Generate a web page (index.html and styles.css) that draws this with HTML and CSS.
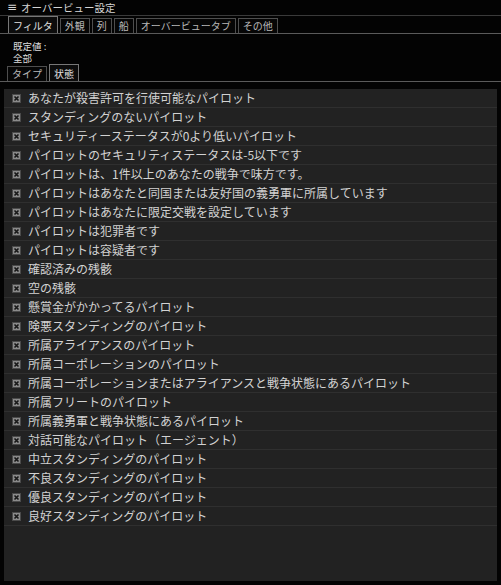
FILE: index.html
```html
<!DOCTYPE html>
<html lang="ja">
<head>
<meta charset="utf-8">
<link rel="stylesheet" href="styles.css">
</head>
<body>
<div class="window">
  <div class="titlebar"><span class="menu">≡</span><span class="title">オーバービュー設定</span></div>
  <div class="tabs">
    <div class="tab active">フィルタ</div>
    <div class="tab">外観</div>
    <div class="tab">列</div>
    <div class="tab">船</div>
    <div class="tab">オーバービュータブ</div>
    <div class="tab">その他</div>
  </div>
  <div class="preset">
    <div class="preset-line">既定値 :</div>
    <div class="preset-line">全部</div>
  </div>
  <div class="subtabs">
    <div class="tab">タイプ</div>
    <div class="tab active">状態</div>
  </div>
  <div class="panel">
    <div class="row"><svg class="cb" viewBox="0 0 9 9"><rect x="0.5" y="0.5" width="8" height="8" fill="#8a8a8a" stroke="#4a4a4a"/><path d="M2.5 2.5L6.5 6.5M6.5 2.5L2.5 6.5" stroke="#161616" stroke-width="1.6"/></svg><span>あなたが殺害許可を行使可能なパイロット</span></div>
    <div class="row"><svg class="cb" viewBox="0 0 9 9"><rect x="0.5" y="0.5" width="8" height="8" fill="#8a8a8a" stroke="#4a4a4a"/><path d="M2.5 2.5L6.5 6.5M6.5 2.5L2.5 6.5" stroke="#161616" stroke-width="1.6"/></svg><span>スタンディングのないパイロット</span></div>
    <div class="row"><svg class="cb" viewBox="0 0 9 9"><rect x="0.5" y="0.5" width="8" height="8" fill="#8a8a8a" stroke="#4a4a4a"/><path d="M2.5 2.5L6.5 6.5M6.5 2.5L2.5 6.5" stroke="#161616" stroke-width="1.6"/></svg><span>セキュリティーステータスが0より低いパイロット</span></div>
    <div class="row"><svg class="cb" viewBox="0 0 9 9"><rect x="0.5" y="0.5" width="8" height="8" fill="#8a8a8a" stroke="#4a4a4a"/><path d="M2.5 2.5L6.5 6.5M6.5 2.5L2.5 6.5" stroke="#161616" stroke-width="1.6"/></svg><span>パイロットのセキュリティステータスは-5以下です</span></div>
    <div class="row"><svg class="cb" viewBox="0 0 9 9"><rect x="0.5" y="0.5" width="8" height="8" fill="#8a8a8a" stroke="#4a4a4a"/><path d="M2.5 2.5L6.5 6.5M6.5 2.5L2.5 6.5" stroke="#161616" stroke-width="1.6"/></svg><span>パイロットは、1件以上のあなたの戦争で味方です。</span></div>
    <div class="row"><svg class="cb" viewBox="0 0 9 9"><rect x="0.5" y="0.5" width="8" height="8" fill="#8a8a8a" stroke="#4a4a4a"/><path d="M2.5 2.5L6.5 6.5M6.5 2.5L2.5 6.5" stroke="#161616" stroke-width="1.6"/></svg><span>パイロットはあなたと同国または友好国の義勇軍に所属しています</span></div>
    <div class="row"><svg class="cb" viewBox="0 0 9 9"><rect x="0.5" y="0.5" width="8" height="8" fill="#8a8a8a" stroke="#4a4a4a"/><path d="M2.5 2.5L6.5 6.5M6.5 2.5L2.5 6.5" stroke="#161616" stroke-width="1.6"/></svg><span>パイロットはあなたに限定交戦を設定しています</span></div>
    <div class="row"><svg class="cb" viewBox="0 0 9 9"><rect x="0.5" y="0.5" width="8" height="8" fill="#8a8a8a" stroke="#4a4a4a"/><path d="M2.5 2.5L6.5 6.5M6.5 2.5L2.5 6.5" stroke="#161616" stroke-width="1.6"/></svg><span>パイロットは犯罪者です</span></div>
    <div class="row"><svg class="cb" viewBox="0 0 9 9"><rect x="0.5" y="0.5" width="8" height="8" fill="#8a8a8a" stroke="#4a4a4a"/><path d="M2.5 2.5L6.5 6.5M6.5 2.5L2.5 6.5" stroke="#161616" stroke-width="1.6"/></svg><span>パイロットは容疑者です</span></div>
    <div class="row"><svg class="cb" viewBox="0 0 9 9"><rect x="0.5" y="0.5" width="8" height="8" fill="#8a8a8a" stroke="#4a4a4a"/><path d="M2.5 2.5L6.5 6.5M6.5 2.5L2.5 6.5" stroke="#161616" stroke-width="1.6"/></svg><span>確認済みの残骸</span></div>
    <div class="row"><svg class="cb" viewBox="0 0 9 9"><rect x="0.5" y="0.5" width="8" height="8" fill="#8a8a8a" stroke="#4a4a4a"/><path d="M2.5 2.5L6.5 6.5M6.5 2.5L2.5 6.5" stroke="#161616" stroke-width="1.6"/></svg><span>空の残骸</span></div>
    <div class="row"><svg class="cb" viewBox="0 0 9 9"><rect x="0.5" y="0.5" width="8" height="8" fill="#8a8a8a" stroke="#4a4a4a"/><path d="M2.5 2.5L6.5 6.5M6.5 2.5L2.5 6.5" stroke="#161616" stroke-width="1.6"/></svg><span>懸賞金がかかってるパイロット</span></div>
    <div class="row"><svg class="cb" viewBox="0 0 9 9"><rect x="0.5" y="0.5" width="8" height="8" fill="#8a8a8a" stroke="#4a4a4a"/><path d="M2.5 2.5L6.5 6.5M6.5 2.5L2.5 6.5" stroke="#161616" stroke-width="1.6"/></svg><span>険悪スタンディングのパイロット</span></div>
    <div class="row"><svg class="cb" viewBox="0 0 9 9"><rect x="0.5" y="0.5" width="8" height="8" fill="#8a8a8a" stroke="#4a4a4a"/><path d="M2.5 2.5L6.5 6.5M6.5 2.5L2.5 6.5" stroke="#161616" stroke-width="1.6"/></svg><span>所属アライアンスのパイロット</span></div>
    <div class="row"><svg class="cb" viewBox="0 0 9 9"><rect x="0.5" y="0.5" width="8" height="8" fill="#8a8a8a" stroke="#4a4a4a"/><path d="M2.5 2.5L6.5 6.5M6.5 2.5L2.5 6.5" stroke="#161616" stroke-width="1.6"/></svg><span>所属コーポレーションのパイロット</span></div>
    <div class="row"><svg class="cb" viewBox="0 0 9 9"><rect x="0.5" y="0.5" width="8" height="8" fill="#8a8a8a" stroke="#4a4a4a"/><path d="M2.5 2.5L6.5 6.5M6.5 2.5L2.5 6.5" stroke="#161616" stroke-width="1.6"/></svg><span>所属コーポレーションまたはアライアンスと戦争状態にあるパイロット</span></div>
    <div class="row"><svg class="cb" viewBox="0 0 9 9"><rect x="0.5" y="0.5" width="8" height="8" fill="#8a8a8a" stroke="#4a4a4a"/><path d="M2.5 2.5L6.5 6.5M6.5 2.5L2.5 6.5" stroke="#161616" stroke-width="1.6"/></svg><span>所属フリートのパイロット</span></div>
    <div class="row"><svg class="cb" viewBox="0 0 9 9"><rect x="0.5" y="0.5" width="8" height="8" fill="#8a8a8a" stroke="#4a4a4a"/><path d="M2.5 2.5L6.5 6.5M6.5 2.5L2.5 6.5" stroke="#161616" stroke-width="1.6"/></svg><span>所属義勇軍と戦争状態にあるパイロット</span></div>
    <div class="row"><svg class="cb" viewBox="0 0 9 9"><rect x="0.5" y="0.5" width="8" height="8" fill="#8a8a8a" stroke="#4a4a4a"/><path d="M2.5 2.5L6.5 6.5M6.5 2.5L2.5 6.5" stroke="#161616" stroke-width="1.6"/></svg><span>対話可能なパイロット（エージェント）</span></div>
    <div class="row"><svg class="cb" viewBox="0 0 9 9"><rect x="0.5" y="0.5" width="8" height="8" fill="#8a8a8a" stroke="#4a4a4a"/><path d="M2.5 2.5L6.5 6.5M6.5 2.5L2.5 6.5" stroke="#161616" stroke-width="1.6"/></svg><span>中立スタンディングのパイロット</span></div>
    <div class="row"><svg class="cb" viewBox="0 0 9 9"><rect x="0.5" y="0.5" width="8" height="8" fill="#8a8a8a" stroke="#4a4a4a"/><path d="M2.5 2.5L6.5 6.5M6.5 2.5L2.5 6.5" stroke="#161616" stroke-width="1.6"/></svg><span>不良スタンディングのパイロット</span></div>
    <div class="row"><svg class="cb" viewBox="0 0 9 9"><rect x="0.5" y="0.5" width="8" height="8" fill="#8a8a8a" stroke="#4a4a4a"/><path d="M2.5 2.5L6.5 6.5M6.5 2.5L2.5 6.5" stroke="#161616" stroke-width="1.6"/></svg><span>優良スタンディングのパイロット</span></div>
    <div class="row"><svg class="cb" viewBox="0 0 9 9"><rect x="0.5" y="0.5" width="8" height="8" fill="#8a8a8a" stroke="#4a4a4a"/><path d="M2.5 2.5L6.5 6.5M6.5 2.5L2.5 6.5" stroke="#161616" stroke-width="1.6"/></svg><span>良好スタンディングのパイロット</span></div>
  </div>
</div>
</body>
</html>
```

FILE: styles.css
```css
html, body {
  margin: 0;
  padding: 0;
  background: #000;
}
body {
  width: 501px;
  height: 585px;
  overflow: hidden;
  font-family: "Noto Sans CJK JP", "DejaVu Sans", sans-serif;
  color: #cfcfcf;
}
.window {
  display: flex;
  flex-direction: column;
  height: 585px;
  background: #030303;
}
.titlebar {
  border-bottom: 1px solid #3a3a3a;
  display: flex;
  align-items: center;
  padding-left: 7px;
  font-size: 10.5px;
  line-height: 15px;
  box-sizing: border-box;
  height: 16px;
  color: #d4d4d4;
}
.menu {
  font-size: 12px;
  margin-right: 4px;
  font-family: "DejaVu Sans", sans-serif;
}
.tabs, .subtabs {
  display: flex;
  align-items: flex-end;
  gap: 2px;
  border-bottom: 1px solid #5a5a5a;
  font-size: 10px;
}
.tabs {
  height: 17px;
  padding-left: 8px;
}
.subtabs {
  height: 16px;
  padding-left: 7px;
}
.tab {
  border: 1px solid #4e4e4e;
  border-bottom: none;
  padding: 0 4px;
  height: 14px;
  line-height: 14px;
  color: #b8b8b8;
  background: #060606;
}
.tab.active {
  height: 16px;
  line-height: 17px;
  color: #e2e2e2;
  border-color: #777;
  background: #0c0c0c;
}
.preset {
  font-size: 10px;
  padding: 6px 0 0 13px;
  height: 25px;
  color: #dcdcdc;
}
.preset-line {
  height: 12px;
  line-height: 12px;
  font-size: 9.5px;
}
.panel {
  margin: 7px 4px 0 4px;
  background: #222;
  height: 492px;
  width: 493px;
}
.row {
  display: flex;
  align-items: center;
  height: 18px;
  border-bottom: 1px solid #2f2f2f;
  font-size: 12px;
  line-height: 18px;
  color: #d2d2d2;
}
.cb {
  width: 9px;
  height: 9px;
  margin-left: 8px;
  margin-right: 7px;
  flex: none;
}
```
